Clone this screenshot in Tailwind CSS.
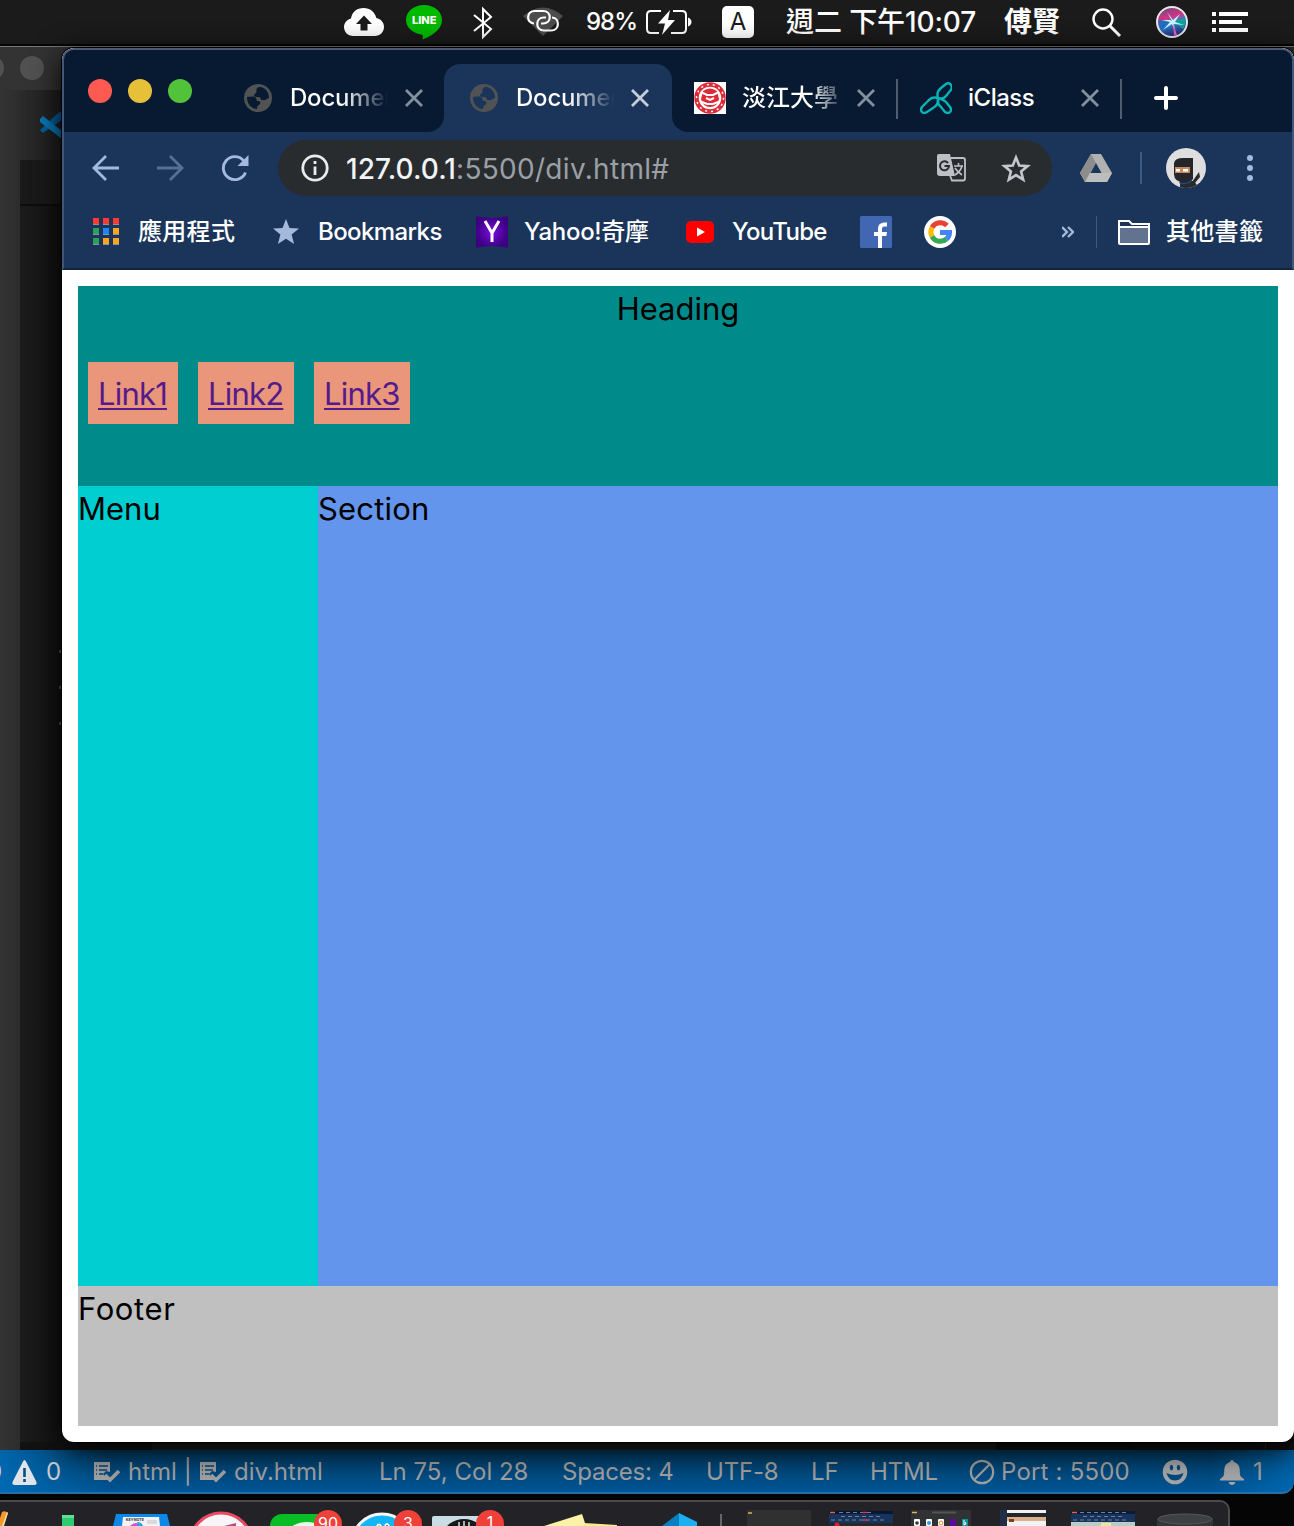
<!DOCTYPE html>
<html lang="zh-Hant">
<head>
<meta charset="utf-8">
<title>Document</title>
<script src="https://cdn.jsdelivr.net/npm/@tailwindcss/browser@4"></script>
</head>
<body class="relative h-[1526px] w-[1294px] overflow-hidden bg-[#050506] font-['Inter','Noto_Sans_CJK_TC',sans-serif]">

<!-- menu bar -->
<header class="flex h-[44px] items-center whitespace-nowrap bg-[#1b1b1b] pl-[344px] text-white">
  <div class="w-[62px] shrink-0">
    <svg width="40" height="30" viewBox="0 0 40 30"><path d="M9 29C4 29 0 25 0 20c0-4 3-7.500 7-8.500C8 5 13 1 19.500 1 26 1 31 5 32.300 11 37 12 40 15.500 40 20c0 5-4 9-9 9Z" fill="#fff"/><path d="M20 8.500 28 17h-4.500v6.500h-7V17H12Z" fill="#1b1b1b"/></svg>
  </div>
  <div class="w-[67px] shrink-0">
    <svg width="36" height="36" viewBox="0 0 36 36"><path d="M18 1C8 1 0 7.500 0 16c0 7 6 13 15 14.500 2 .4 2 1 1.500 5C24 33 36 26 36 16 36 7.500 28 1 18 1Z" fill="#00b900"/><text x="6" y="20" font-size="11" font-weight="800" fill="#fff" textLength="24.500" lengthAdjust="spacingAndGlyphs" font-family="Inter">LINE</text></svg>
  </div>
  <div class="w-[50px] shrink-0 pt-[2px]">
    <svg width="20" height="34" viewBox="0 0 20 34" fill="none" stroke="#fff" stroke-width="2"><path d="M1 9l17 14-8 8V3l8 8L1 25"/></svg>
  </div>
  <div class="w-[63px] shrink-0">
    <svg width="40" height="32" viewBox="0 0 40 32" fill="none"><path d="M0 10Q20-7 40 10L20 30Z" fill="#4c4c4c"/><g stroke="#fff" stroke-width="2.200"><path d="M11 17.500C3 17 3 5 12 5h8c9 0 9 12.500 0 12.500h-2"/><path d="M29 11.500c8 .5 8 13-1 13h-7c-9 0-9-13 0-13h2"/></g></svg>
  </div>
  <div class="w-[60px] shrink-0 text-[24px] tracking-[-1px] font-medium">98%</div>
  <div class="w-[76px] shrink-0">
    <svg width="46" height="28" viewBox="0 0 46 28"><path d="M15 3H5Q1 3 1 7v14q0 4 4 4h8M27 3h9q4 0 4 4v14q0 4-4 4H25" fill="none" stroke="#fff" stroke-width="2"/><path d="M24 2 12 15.500h7L16 27 29 12h-7Z" fill="#fff"/><path d="M42 9.500q3.500 1.500 3.500 4.500T42 18.500Z" fill="#fff"/></svg>
  </div>
  <div class="w-[64px] shrink-0"><div class="flex h-8 w-8 items-center justify-center rounded-[5px] bg-white text-[24px] text-[#1b1b1b]">A</div></div>
  <div class="w-[218px] shrink-0 text-[28px] font-medium tracking-[-0.1px]">週二 下午10:07</div>
  <div class="w-[88px] shrink-0 text-[28px] font-bold">傅賢</div>
  <div class="w-[64px] shrink-0 pt-[2px]">
    <svg width="30" height="30" viewBox="0 0 30 30" fill="none" stroke="#fff" stroke-width="2.400"><circle cx="11" cy="11" r="9.500"/><path d="M18 18l10 10" stroke-width="3"/></svg>
  </div>
  <div class="w-[56px] shrink-0">
    <svg width="32" height="32" viewBox="0 0 32 32"><defs><linearGradient id="siri" x1=".3" y1="0" x2=".6" y2="1"><stop offset="0" stop-color="#6d4a80"/><stop offset=".35" stop-color="#d63483"/><stop offset=".55" stop-color="#2c82d0"/><stop offset="1" stop-color="#22236b"/></linearGradient></defs><circle cx="16" cy="16" r="15" fill="url(#siri)" stroke="#e8e8ec" stroke-width="2"/><path d="M17 15 29 12a13 13 0 0 1-2 11Z" fill="#159f9a"/><path d="M3 14l13 2-9 10Q2 20 3 14Z" fill="#1f6fc4"/><path d="m16 15-5-9 6 8 7-6-5 8 9 3-10-1 1 8-3-8-9 6 7-8-8-2 8 0Z" fill="#c8f6ff"/><path d="m17 17 4 12-3 .5Z" fill="#f05ab8"/></svg>
  </div>
  <div class="shrink-0">
    <svg width="36" height="20" viewBox="0 0 36 20" fill="#fff"><path d="M0 0h4v4H0zM0 8h4v4H0zM0 16h4v4H0zM7 0h29v4H7zM7 8h23v4H7zM7 16h29v4H7z"/></svg>
  </div>
</header>

<!-- editor window -->
<section class="mt-[2px] flex h-[1448px] flex-col overflow-hidden rounded-br-[12px] border-t border-[#77777a] bg-[#303030]">
  <div class="flex h-[43px] items-center bg-gradient-to-r from-[#333] to-[#2b2b2b]">
    <div class="-mt-[2px] -ml-5 h-6 w-6 shrink-0 rounded-full bg-[#515151]"></div>
    <div class="-mt-[2px] ml-4 h-6 w-6 shrink-0 rounded-full bg-[#515151]"></div>
  </div>
  <div class="flex flex-1">
    <div class="w-5 shrink-0 bg-gradient-to-r from-[#343434] to-[#2c2c2c]"></div>
    <div class="flex flex-1 flex-col bg-[#101010]">
      <div class="flex h-[70px] w-[42px] items-center justify-end overflow-hidden bg-gradient-to-r from-[#2b2b2b] to-[#1e1e1e]">
        <svg width="22" height="28" viewBox="0 0 22 28"><path d="m0 19 18-17 4-2v9L3 22Z" fill="#005f9c"/><path d="M0 8l3-3 19 15v8L0 11Z" fill="#0878b8"/></svg>
      </div>
      <div class="h-[46px] w-[42px] border-b-2 border-[#0d0d0d] bg-[#191919]"></div>
      <div class="flex w-[42px] flex-1 flex-col items-end bg-gradient-to-r from-[#1c1c1c] to-[#121212] pt-[444px]">
        <div class="h-[3px] w-[3px] bg-[#555]"></div><div class="mt-[11px] h-[2px] w-px bg-[#777]"></div>
        <div class="mt-[20px] h-[3px] w-[3px] bg-[#555]"></div><div class="mt-[11px] h-[2px] w-px bg-[#777]"></div>
        <div class="mt-[20px] h-[3px] w-[3px] bg-[#555]"></div><div class="mt-[11px] h-[2px] w-px bg-[#777]"></div>
      </div>
      <div class="flex h-[8px]">
        <div class="w-[132px] bg-[#121212]"></div><div class="w-[844px] bg-[#1e1e1e]"></div><div class="w-[136px] bg-[#0f0f0f]"></div><div class="w-[134px] border-r border-[#2b2b2b] bg-[#121212]"></div>
      </div>
    </div>
  </div>
  <div class="h-[44px] shrink-0">
  <div class="flex h-[44px] items-center overflow-hidden whitespace-nowrap rounded-br-[12px] border-b-2 border-[#266ea8] bg-[linear-gradient(to_right,#0070bdcc_0,#0070bd00_110px,#0070bd00_1210px,#0070bdaa_1294px),linear-gradient(#003a60,#005595)] pt-[2px] text-[24px] text-[#a0a0a0]">
    <div class="-ml-[13px] w-[25px] shrink-0 text-[#d7d7d7]">0</div>
    <div class="w-[34px] shrink-0"><svg width="25" height="25" viewBox="0 0 25 25"><path d="M11 1.500q1.500-3 3 0L24.500 22q.8 3-2 3h-20q-2.800 0-2-3Z" fill="#e0e4e8"/><path d="M11.200 8h2.600v9h-2.600zM11.200 19h2.600v3h-2.600z" fill="#00508a"/></svg></div>
    <div class="w-[48px] shrink-0 text-[#c7cbd0]">0</div>
    <div class="w-[34px] shrink-0"><svg width="26" height="23" viewBox="0 0 26 23"><path d="M0 1h16v10l-4-1-3 3 5 6H0Z" fill="#a0a0a0"/><path d="M5 5h9M5 9h8M5 13h4M2 5h1M2 9h1M2 13h1" stroke="#004679" stroke-width="1.500"/><path d="m11 14 5 5 9-9" fill="none" stroke="#a0a0a0" stroke-width="3.600"/></svg></div>
    <div class="w-[72px] shrink-0">html |</div>
    <div class="w-[34px] shrink-0"><svg width="26" height="23" viewBox="0 0 26 23"><path d="M0 1h16v10l-4-1-3 3 5 6H0Z" fill="#a0a0a0"/><path d="M5 5h9M5 9h8M5 13h4M2 5h1M2 9h1M2 13h1" stroke="#004679" stroke-width="1.500"/><path d="m11 14 5 5 9-9" fill="none" stroke="#a0a0a0" stroke-width="3.600"/></svg></div>
    <div class="w-[145px] shrink-0">div.html</div>
    <div class="w-[183px] shrink-0">Ln 75, Col 28</div>
    <div class="w-[144px] shrink-0 tracking-[-0.2px]">Spaces: 4</div>
    <div class="w-[105px] shrink-0 tracking-[-0.2px]">UTF-8</div>
    <div class="w-[59px] shrink-0">LF</div>
    <div class="w-[99px] shrink-0 tracking-[-0.2px]">HTML</div>
    <div class="w-[32px] shrink-0"><svg width="26" height="26" viewBox="0 0 26 26" fill="none" stroke="#a0a0a0" stroke-width="2.200"><circle cx="13" cy="13" r="11.200"/><path d="M5 21 21 5"/></svg></div>
    <div class="w-[161px] shrink-0 tracking-[0.2px]">Port : 5500</div>
    <div class="w-[58px] shrink-0"><svg width="26" height="26" viewBox="0 0 26 26"><circle cx="13" cy="13" r="12.300" fill="#a3a5a7"/><ellipse cx="9.500" cy="8.500" rx="1.700" ry="2.700" fill="#00487c"/><ellipse cx="16.500" cy="8.500" rx="1.700" ry="2.700" fill="#00487c"/><path d="M4.500 14q8.500 4 17 0-2 7.500-8.500 7.500T4.500 14Z" fill="#00487c"/></svg></div>
    <div class="w-[33px] shrink-0"><svg width="24" height="25" viewBox="0 0 24 25" fill="#a3a5a7"><path d="M12 0q1.800 0 1.800 2c4 1 6 4 6 9 0 5 1 6 4.200 8v1.500H0V19c3.200-2 4.200-3 4.200-8 0-5 2-8 6-9Q10.200 0 12 0ZM8.500 22h7q-1 3-3.500 3t-3.500-3Z"/></svg></div>
    <div>1</div>
  </div>
  </div>
</section>

<!-- dock -->
<footer class="mt-[6px] h-[40px] w-[1230px] overflow-hidden rounded-tr-[10px] border-t-2 border-r-2 border-[#4b4a4d] bg-[#232226]">
  <svg width="1228" height="24" viewBox="0 1502 1228 24" font-family="Inter" text-anchor="middle">
    <path d="M0 1526V1518l2-6q3-2 6 1l-5 13Z" fill="#f39b28"/><path d="M2 1526l5-14 1 1-4 13Z" fill="#ffdca0"/>
    <rect x="62" y="1515" width="12" height="11" fill="#2ecb70"/><rect x="62" y="1515" width="12" height="3" fill="#63df93"/>
    <path d="M113 1526l3-12h51l3 12Z" fill="#0d88e8"/><path d="M122 1526l1-9h36l1 9Z" fill="#f3f3f7"/><text x="135" y="1521" font-size="3.800" font-weight="700" fill="#333">KEYNOTE</text><path d="M130 1526q6-6 12 0Z" fill="#ce55d1"/><path d="M137 1522q5 0 6 4h-5Z" fill="#2aa6ea"/><path d="M147 1521h10M147 1523h10" stroke="#aaa" stroke-width=".7"/>
    <circle cx="221" cy="1544" r="31" fill="#f8f5f8" stroke="#e94b62" stroke-width="3"/><path d="m224 1526 12-3v3Z" fill="#b55082"/>
    <rect x="270" y="1514" width="58" height="50" rx="12" fill="#08bd25"/><ellipse cx="307" cy="1532" rx="18" ry="10" fill="#e4fae7"/>
    <circle cx="328" cy="1524" r="14" fill="#f0403a"/><text x="328" y="1529" font-size="16" fill="#fff">90</text>
    <circle cx="382" cy="1544" r="30" fill="#13b5f4" stroke="#f4f8fa" stroke-width="3"/><path d="M377 1526q2-3 4 0M385 1526q2-4 4 0" stroke="#fff" stroke-width="2"/>
    <circle cx="408" cy="1524" r="14" fill="#f0403a"/><text x="408" y="1529" font-size="16" fill="#fff">3</text>
    <rect x="432" y="1516" width="60" height="40" rx="2" fill="#c9dde4"/><ellipse cx="464" cy="1534" rx="20" ry="15" fill="#161819"/><path d="M459 1526v-4M464 1526v-5M469 1526v-4" stroke="#e0e3e5" stroke-width="1.500"/>
    <circle cx="490" cy="1524" r="14" fill="#f0403a"/><text x="490" y="1528" font-size="16" fill="#fff">1</text>
    <path d="m544 1526 38-12 4 12Z" fill="#faf3a7"/><path d="m584 1523 33 2v1h-33Z" fill="#f8ed91"/>
    <path d="m662 1526 17-13v13Z" fill="#087fbe"/><path d="m679 1513 18 9v4h-18Z" fill="#1bb0f2"/>
    <path d="M721 1514v12" stroke="#66656a" stroke-width="2"/>
    <rect x="747" y="1510" width="64" height="16" fill="#303030"/><path d="M748 1513h4" stroke="#d5b64a" stroke-width="1.500"/>
    <rect x="829" y="1511" width="64" height="15" fill="#19345c"/><rect x="829" y="1511" width="64" height="3" fill="#071830"/><path d="M830 1512.500h5" stroke="#e6604d" stroke-width="1.500"/><path d="M839 1512.500h34M841 1516.500h40M831 1520h54" stroke="#6d80a0" stroke-width="1.200" stroke-dasharray="4 3"/><path d="M829 1523h64v3h-64Z" fill="#25272b"/><circle cx="837" cy="1525" r="2.500" fill="#d91f30"/><path d="M862 1512.500h5M863 1520h4" stroke="#e43145" stroke-width="1.500"/>
    <rect x="911" y="1510" width="60" height="16" fill="#303234"/><path d="M912 1512.500h5" stroke="#e4b34c" stroke-width="1.500"/><path d="M932 1512.500h24" stroke="#555" stroke-width="2"/><g fill="#fff"><rect x="914" y="1519" width="6" height="7" rx="1"/><rect x="926" y="1519" width="6" height="7" rx="1"/><rect x="938" y="1519" width="6" height="7" rx="1"/></g><circle cx="917" cy="1523" r="1.800" fill="#333"/><circle cx="929" cy="1523" r="2" fill="#3698ea"/><circle cx="941" cy="1523" r="2" fill="none" stroke="#de8b36"/><rect x="950" y="1519" width="6" height="7" fill="#5a0ca0"/><rect x="962" y="1519" width="6" height="7" fill="#0b9695"/><path d="M964 1520v5l2-1-1-2" stroke="#fff" fill="none"/>
    <rect x="1000" y="1510" width="46" height="16" fill="#f2f2f3"/><path d="M1007 1513h39v4h-39Z" fill="#24262a"/><path d="M1000 1510h7v16h-7Z" fill="#222d46"/><path d="M1007 1517h39v4h-39Z" fill="#d8b08d"/><path d="M1009 1519h5v3h-5Z" fill="#7a4022"/>
    <rect x="1071" y="1511" width="64" height="15" fill="#19345c"/><rect x="1071" y="1511" width="64" height="3" fill="#0a1c36"/><path d="M1072 1512.500h5" stroke="#e6604d" stroke-width="1.500"/><path d="M1080 1512.500h46M1083 1516.500h40M1073 1520h54" stroke="#6d80a0" stroke-width="1.200" stroke-dasharray="4 3"/><path d="M1071 1522h64v4h-64Z" fill="#b7cdc5"/><path d="M1101 1523h10v3h-10Z" fill="#efe5a0"/>
    <path d="M1157 1520q0-6 28-6t28 6v6h-56Z" fill="#34373a"/><ellipse cx="1185" cy="1519" rx="27" ry="5" fill="#3d4144" stroke="#54585b"/>
  </svg>
</footer>

<!-- browser window, in front of the editor -->
<main class="absolute left-[62px] top-[48px] flex h-[1394px] w-[1232px] flex-col overflow-hidden rounded-[12px] bg-white shadow-[0_0_0_1px_#000,0_6px_30px_#000]">
  <div class="flex h-[222px] shrink-0 flex-col overflow-hidden whitespace-nowrap rounded-t-[12px] border-2 border-t-[#4c5b70] border-r-[#40577a] border-b-[#10233f] border-l-[#40577a] bg-[#1b355a] text-white">
    <!-- tab strip -->
    <div class="flex h-[82px] shrink-0">
      <div class="flex w-[380px] shrink-0 items-center rounded-br-[16px] bg-[#081a31]">
        <div class="ml-[24px] flex w-[156px] shrink-0 gap-4">
          <div class="h-6 w-6 rounded-full bg-[#ff5a52]"></div><div class="h-6 w-6 rounded-full bg-[#e6c039]"></div><div class="h-6 w-6 rounded-full bg-[#52c23b]"></div>
        </div>
        <div class="flex items-center pt-[14px]">
          <svg class="shrink-0" width="28" height="28" viewBox="0 0 28 28"><circle cx="14" cy="14" r="14" fill="#505254"/><path d="M16 3c-3 0-4 2.500-3.500 4.500.3 2-2.500 2-2.500 4 0 1.500 2 1.500 4 1.500 2.500 0 3 1.500 3 3 2 0 4 .5 5-.5s2-1.500 3-1.500C25 8 21 3 16 3ZM3 13c3-.5 8-1 9 1 1 1.500 0 3 2 3s3 1.500 2 3-3 1-3 5C7 24.500 3 20 3 13Z" fill="#081a31" /></svg>
          <div class="ml-[18px] w-[98px] overflow-hidden bg-gradient-to-r from-white from-55% to-transparent bg-clip-text text-[24px] font-medium tracking-[-0.2px] text-transparent">Document</div>
          <svg class="ml-[17px] shrink-0" width="18" height="18" viewBox="0 0 18 18" stroke="#84909d" stroke-width="2.800"><path d="m1 1 16 16M17 1 1 17"/></svg>
        </div>
      </div>
      <div class="w-[228px] shrink-0 bg-[#081a31] pt-[14px]">
        <div class="flex h-[68px] items-center rounded-t-[16px] bg-[#1b355a] pl-[26px]">
          <svg class="shrink-0" width="28" height="28" viewBox="0 0 28 28"><circle cx="14" cy="14" r="14" fill="#505254"/><path d="M16 3c-3 0-4 2.500-3.500 4.500.3 2-2.500 2-2.500 4 0 1.500 2 1.500 4 1.500 2.500 0 3 1.500 3 3 2 0 4 .5 5-.5s2-1.500 3-1.500C25 8 21 3 16 3ZM3 13c3-.5 8-1 9 1 1 1.500 0 3 2 3s3 1.500 2 3-3 1-3 5C7 24.500 3 20 3 13Z" fill="#1b355a"/></svg>
          <div class="ml-[18px] w-[98px] overflow-hidden bg-gradient-to-r from-white from-55% to-transparent bg-clip-text text-[24px] font-medium tracking-[-0.2px] text-transparent">Document</div>
          <svg class="ml-[17px] shrink-0" width="18" height="18" viewBox="0 0 18 18" stroke="#c5ced8" stroke-width="2.800"><path d="m1 1 16 16M17 1 1 17"/></svg>
        </div>
      </div>
      <div class="flex flex-1 items-center rounded-bl-[16px] bg-[#081a31] pt-[14px] pl-[22px]">
        <svg class="shrink-0" width="32" height="32" viewBox="0 0 32 32" fill="none"><path fill="#fff" d="M0 0h32v32H0z"/><circle cx="16" cy="16" r="13.500" stroke="#dd2a36" stroke-width="4.500"/><circle cx="16" cy="16" r="13.500" stroke="#fff" stroke-width="1.500" stroke-dasharray="2 4"/><path d="M9 9q7-5 14 0l2 8q-2 8-9 8t-9-8Z" fill="#dd2a36"/><path d="M7 10l6 3h6l6-3M12 16l4 2 4-2M8 20l5 2h6l5-2" stroke="#fff" stroke-width="2"/></svg>
        <div class="ml-4 w-[98px] overflow-hidden bg-gradient-to-r from-white from-70% to-white/20 bg-clip-text text-[24px] font-medium text-transparent">淡江大學</div>
        <svg class="ml-[17px] shrink-0" width="18" height="18" viewBox="0 0 18 18" stroke="#84909d" stroke-width="2.800"><path d="m1 1 16 16M17 1 1 17"/></svg>
        <div class="ml-[21px] mt-[2px] h-10 w-[2px] bg-[#515d6d]"></div>
        <svg class="ml-[22px] shrink-0" width="32" height="32" viewBox="0 0 32 32" fill="none" stroke="#08b3b8" stroke-width="2.400" stroke-linejoin="round"><path d="M18 16q-2-6 3-10l5-4q3-2 5 1t-1 6l-4 5q-3 4-8 2Z"/><path d="M18 16q-6-2-10 3l-6 6q-2 3 0 5t5 0l6-4q6-3 5-10Z"/><path d="M18 16q-1 6 3 9l4 5q3 2 5 0t0-5l-4-5q-3-3-8-4Z"/></svg>
        <div class="ml-4 w-[105px] text-[24px] font-medium tracking-[-0.5px]">iClass</div>
        <svg class="ml-[8px] shrink-0" width="18" height="18" viewBox="0 0 18 18" stroke="#84909d" stroke-width="2.800"><path d="m1 1 16 16M17 1 1 17"/></svg>
        <div class="ml-[21px] mt-[2px] h-10 w-[2px] bg-[#515d6d]"></div>
        <svg class="ml-[32px] shrink-0" width="24" height="24" viewBox="0 0 24 24" stroke="#fff" stroke-width="4" stroke-linecap="round"><path d="M12 2v20M2 12h20"/></svg>
      </div>
    </div>
    <!-- toolbar -->
    <div class="flex h-[72px] shrink-0 items-center">
      <svg class="ml-[28px] shrink-0" width="27" height="26" viewBox="0 0 27 26" fill="none" stroke="#a4b9dc" stroke-width="2.800"><path d="M14 1 2 13l12 12M2 13h25"/></svg>
      <svg class="ml-[38px] shrink-0" width="27" height="26" viewBox="0 0 27 26" fill="none" stroke="#566f94" stroke-width="2.800"><path d="m13 1 12 12-12 12M25 13H0"/></svg>
      <svg class="ml-[37px] shrink-0" width="28" height="28" viewBox="0 0 28 28"><path d="M24.500 18.500A11.500 11.500 0 1 1 22.500 6.500" fill="none" stroke="#a4b9dc" stroke-width="2.900"/><path d="M27.500 1v11H16.500Z" fill="#a4b9dc"/></svg>
      <div class="ml-[29px] flex h-14 w-[774px] shrink-0 items-center rounded-full bg-[#282c2f] pl-[23px]">
        <svg class="shrink-0" width="28" height="28" viewBox="0 0 28 28" fill="none" stroke="#e8eaed" stroke-width="2.800"><circle cx="14" cy="14" r="12.200"/><path d="M14 12.500V21M14 7v3"/></svg>
        <div class="ml-[17px] w-[591px] pt-px text-[28px] tracking-[0.3px] text-[#9aa0a6]"><span class="font-medium tracking-[0.1px] text-[#f1f3f4]">127.0.0.1</span>:5500/div.html#</div>
        <svg class="shrink-0" width="30" height="30" viewBox="0 0 30 30"><path d="M2 1h11l5 22H3q-3 0-3-3V3q0-2 2-2Z" fill="#bdc1c6"/><path d="M14 5h12q2 0 2 2v18.500q0 2-2 2H15l-2-5" fill="none" stroke="#bdc1c6" stroke-width="1.800"/><path d="M11 10A4.500 4.500 0 1 0 12 13H7.500" fill="none" stroke="#282c2f" stroke-width="2"/><path d="M17 13h9M21.500 10v3M25 13c-1 4-4 7-7 9M18 15c2 3 4 5 7 7" stroke="#bdc1c6" stroke-width="1.600" fill="none"/></svg>
        <svg class="ml-[34px] shrink-0" width="30" height="29" viewBox="0 0 30 29" fill="none" stroke="#c3c7cb" stroke-width="2.600"><path d="m15 3.500 3.200 8 8.400.6-6.500 5.300 2.100 8.300-7.200-4.600-7.200 4.600 2.100-8.300-6.500-5.300 8.400-.6Z"/></svg>
      </div>
      <svg class="ml-[28px] shrink-0" width="32" height="28" viewBox="0 0 32 28"><path d="M11 0h10l11 19-5 9H5l-5-9Z" fill="#b1b1b1"/><path d="M11 0l5 9L5 28l-5-9Z" fill="#8d8d8d"/><path d="M10 19h22l-5 9H5Z" fill="#bdbdbd"/><path d="m16 9 5.500 10h-11Z" fill="#1b355a"/></svg>
      <div class="ml-[28px] h-8 w-[2px] bg-[#3f5a80]"></div>
      <svg class="ml-[24px] shrink-0" width="40" height="40" viewBox="0 0 40 40"><defs><clipPath id="avatar"><circle cx="20" cy="20" r="20"/></clipPath></defs><g clip-path="url(#avatar)"><path fill="#dedede" d="M0 0h40v40H0z"/><path d="M14 33h14l5 7H14Z" fill="#29292a"/><path d="M8 15q1-5 9-5h10v21q-3 4-8 4-11-1-11-9Z" fill="#242629"/><path d="M9 19h15v6H9Z" fill="#c98a5a"/><path d="M10 21h4v2.500h-4zM17 21h5v2.500h-5z" fill="#fff"/><path d="M13 34q8 3 13-3v2q-4 4-12 3Z" fill="#1c4b8f"/><path d="M26 34l7-10 1 5-5 6Z" fill="#292929"/></g></svg>
      <svg class="ml-[41px] shrink-0" width="6" height="26" viewBox="0 0 6 26" fill="#a4b9dc"><circle cx="3" cy="3" r="3"/><circle cx="3" cy="13" r="3"/><circle cx="3" cy="23" r="3"/></svg>
    </div>
    <!-- bookmarks -->
    <div class="flex h-[56px] shrink-0 items-center text-[24px] font-medium">
      <svg class="ml-[29px] -mt-px shrink-0" width="26" height="27" viewBox="0 0 26 27"><path d="M0 2h6v5H0zM10 2h6v5h-6zM20 2h6v5h-6zM0 12h6v5H0zM10 12h6v5h-6zM20 12h6v5h-6zM0 22h6v5H0zM10 22h6v5h-6zM20 22h6v5h-6z" fill="#8494a5"/><path d="M0 0h6v6H0zM10 0h6v6h-6zM20 0h6v6h-6z" fill="#fa3b35"/><path d="M0 10h6v6H0zM0 20h6v6H0z" fill="#2f9e5b"/><path d="M10 10h6v6h-6z" fill="#1c87f2"/><path d="M20 10h6v6h-6zM10 20h6v6h-6zM20 20h6v6h-6z" fill="#f7a421"/></svg>
      <div class="ml-[19px] w-[135px] shrink-0 tracking-[0.3px]">應用程式</div>
      <svg class="-mt-[2px] shrink-0" width="26" height="25" viewBox="0 0 26 25" fill="#a4b9dc"><path d="m13 0 3.500 9 9.500.6-7.400 6 2.500 9.400-8.100-5.300L4.900 25l2.500-9.400L0 9.600 9.500 9Z"/></svg>
      <div class="ml-[19px] w-[158px] shrink-0 tracking-[-0.6px]">Bookmarks</div>
      <svg class="shrink-0" width="32" height="32" viewBox="0 0 32 32"><defs><radialGradient id="yahoo"><stop offset="0" stop-color="#7b0be0"/><stop offset="1" stop-color="#3b0080"/></radialGradient></defs><path d="M0 0q16 4 32 0v32q-16-4-32 0Z" fill="url(#yahoo)"/><path d="m9 5 7 12 7-12M16 16v10" fill="none" stroke="#fff" stroke-width="3"/></svg>
      <div class="ml-4 w-[162px] shrink-0 tracking-[-0.3px]">Yahoo!奇摩</div>
      <svg class="shrink-0" width="28" height="22" viewBox="0 0 28 22"><rect width="28" height="22" rx="5" fill="#f00"/><path d="m11 6.500 8 4.500-8 4.500Z" fill="#fff"/></svg>
      <div class="ml-[18px] w-[128px] shrink-0 tracking-[-0.7px]">YouTube</div>
      <svg class="shrink-0" width="32" height="32" viewBox="0 0 32 32"><rect width="32" height="32" rx="1.500" fill="#4267b2"/><path d="M18 32V20h-4v-4h4v-3c0-5 3-7 9-6.500v4h-2.500c-2 0-2.500 1-2.500 2.500v3h5l-.6 4H22v12Z" fill="#fff"/></svg>
      <svg class="ml-[32px] shrink-0" width="32" height="32" viewBox="0 0 32 32" fill="none" stroke-width="5"><circle cx="16" cy="16" r="16" fill="#fff"/><path d="M8 11.500A9.500 9.500 0 0 1 23 9.500" stroke="#ea4335"/><path d="M8 11.500a9.500 9.500 0 0 0 0 9" stroke="#fbbc05"/><path d="M8 20.500a9.500 9.500 0 0 0 14.500 2.500" stroke="#34a853"/><path d="M22.500 23q3-2.500 3-6.500H16" stroke="#4285f4"/></svg>
      <svg class="ml-[106px] shrink-0" width="12" height="12" viewBox="0 0 12 12" fill="none" stroke="#a4b9dc" stroke-width="2.400"><path d="m0 1 5 5-5 5M6 1l5 5-5 5"/></svg>
      <div class="ml-[22px] h-8 w-px bg-[#3f5a80]"></div>
      <svg class="ml-[21px] shrink-0" width="32" height="26" viewBox="0 0 32 26"><path d="M1 24V2h10l3 3h17v19q0 1-1 1H2q-1 0-1-1Z" fill="#1b355a" stroke="#fff" stroke-width="2"/><path d="M2 9h28v15H2Z" fill="#61738f"/><path d="M1 8h30" stroke="#fff" stroke-width="2"/></svg>
      <div class="ml-4 tracking-[0.3px]">其他書籤</div>
    </div>
  </div>
  <!-- page -->
  <div class="p-4 text-[31px] leading-[46px] text-black">
    <div class="h-[200px] bg-[#008b8b]">
      <div class="text-center">Heading</div>
      <nav class="mt-[30px] flex gap-5 pl-[10px] tracking-[-0.8px] text-[#551a8b]">
        <a class="flex h-[62px] w-[90px] items-center pt-px pl-[10px] bg-[#e9967a] underline decoration-2 underline-offset-[3px]">Link1</a>
        <a class="flex h-[62px] w-[96px] items-center pt-px pl-[10px] bg-[#e9967a] underline decoration-2 underline-offset-[3px]">Link2</a>
        <a class="flex h-[62px] w-[96px] items-center pt-px pl-[10px] bg-[#e9967a] underline decoration-2 underline-offset-[3px]">Link3</a>
      </nav>
    </div>
    <div class="flex h-[800px]">
      <div class="w-[240px] bg-[#00ced1]">Menu</div>
      <div class="flex-1 bg-[#6495ed] tracking-[0.2px]">Section</div>
    </div>
    <div class="h-[140px] bg-[#c0c0c0] tracking-[0.6px]">Footer</div>
  </div>
</main>
</body>
</html>
